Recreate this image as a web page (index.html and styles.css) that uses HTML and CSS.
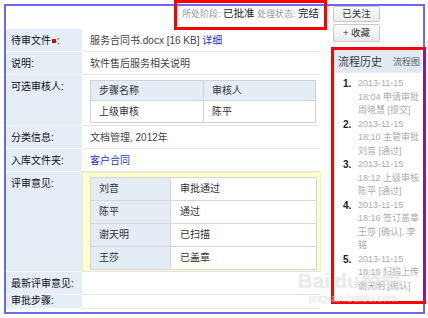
FILE: index.html
```html
<!DOCTYPE html>
<html lang="zh-CN">
<head>
<meta charset="utf-8">
<title>文件审批</title>
<link rel="stylesheet" href="styles.css">
</head>
<body>
<div class="screen">
  <div class="page">
    <div class="main">
      <div class="status">所处阶段: <b>已批准</b> 处理状态: <b>完结</b></div>
      <div class="row h23">
        <div class="lbl">待审文件<i class="req"></i>:</div>
        <div class="val">服务合同书.docx [16 KB] <a class="link">详细</a></div>
      </div>
      <div class="row h23">
        <div class="lbl">说明:</div>
        <div class="val">软件售后服务相关说明</div>
      </div>
      <div class="row h51">
        <div class="lbl">可选审核人:</div>
        <div class="val box">
          <table class="grid steps">
            <tr class="head"><td class="c1">步骤名称</td><td>审核人</td></tr>
            <tr class="body"><td class="c1">上级审核</td><td>陈平</td></tr>
          </table>
        </div>
      </div>
      <div class="row h23">
        <div class="lbl">分类信息:</div>
        <div class="val">文档管理, 2012年</div>
      </div>
      <div class="row h23">
        <div class="lbl">入库文件夹:</div>
        <div class="val"><a class="link">客户合同</a></div>
      </div>
      <div class="row h100">
        <div class="lbl">评审意见:</div>
        <div class="val review">
          <table class="grid opinions">
            <tr><td class="who">刘音</td><td>审批通过</td></tr>
            <tr><td class="who">陈平</td><td>通过</td></tr>
            <tr><td class="who">谢天明</td><td>已扫描</td></tr>
            <tr><td class="who">王莎</td><td>已盖章</td></tr>
          </table>
        </div>
      </div>
      <div class="row h23">
        <div class="lbl">最新评审意见:</div>
        <div class="val"></div>
      </div>
      <div class="row h14">
        <div class="lbl">审批步骤:</div>
        <div class="val"></div>
      </div>
    </div>
    <div class="side">
      <div class="actions">
        <button class="btn btn-top">已关注</button>
        <button class="btn">+ 收藏</button>
      </div>
      <div class="history">
        <div class="hist-head"><span class="hist-title">流程历史</span><span class="hist-chart">流程图</span></div>
        <ol class="hist-list">
          <li><span class="num">1.</span><span class="txt">2013-11-15<br>18:04 申请审批<br>周晓慧 [提交]</span></li>
          <li><span class="num">2.</span><span class="txt">2013-11-15<br>18:10 主管审批<br>刘音 [通过]</span></li>
          <li><span class="num">3.</span><span class="txt">2013-11-15<br>18:12 上级审核<br>陈平 [通过]</span></li>
          <li><span class="num">4.</span><span class="txt">2013-11-15<br>18:16 签订盖章<br>王莎 [确认], 李<br>铭</span></li>
          <li><span class="num">5.</span><span class="txt">2013-11-15<br>18:18 扫描上传<br>谢天明 [确认]</span></li>
        </ol>
      </div>
    </div>
  </div>
  <div class="mark mark-status"></div>
  <div class="mark mark-side"></div>
  <div class="wm wm-big">Bai<span class="wm-du">du</span>经验</div>
  <div class="wm wm-url">jingyan.baidu.com</div>
</div>
</body>
</html>
```

FILE: styles.css
```css
* {
  box-sizing: border-box;
  margin: 0;
  padding: 0;
}

html, body {
  width: 428px;
  height: 318px;
  overflow: hidden;
  background: #fff;
}

body {
  font-family: "Liberation Sans", "Noto Sans CJK SC", sans-serif;
  font-size: 10px;
  color: #333;
}

.screen {
  position: relative;
  width: 428px;
  height: 318px;
  padding: 4px 0 0 4px;
}

.page {
  width: 421px;
  height: 310px;
  border: 2px solid #6a6aee;
  display: flex;
  overflow: hidden;
  background: #fff;
}

.main {
  width: 314px;
  flex: none;
}

.status {
  height: 23px;
  line-height: 14px;
  text-align: right;
  padding-right: 1px;
  color: #9a9a9a;
  font-size: 9px;
  white-space: nowrap;
}

.status b {
  font-weight: normal;
  color: #1a1a1a;
  font-size: 10.5px;
}

.row {
  display: grid;
  grid-template-columns: 76px 1fr;
}

.h23 { height: 23px; }
.h51 { height: 51px; }
.h100 { height: 100px; }
.h14 { height: 14px; }

.lbl {
  background: #e5edf7;
  color: #111;
  padding: 6px 0 0 5px;
  line-height: 12px;
  border-bottom: 1px solid #f6f9fc;
  white-space: nowrap;
}

.val {
  padding: 6px 0 0 8px;
  line-height: 12px;
  border-bottom: 1px solid #e4e4e4;
  color: #444;
  white-space: nowrap;
}

.h14 .lbl, .h14 .val {
  padding-top: 0;
  line-height: 11px;
}

.req {
  display: inline-block;
  width: 4px;
  height: 4px;
  background: #e00000;
  margin: 0 1px 1px 1px;
  vertical-align: middle;
}

.link {
  color: #1f2fe0;
  text-decoration: none;
}

.box {
  padding: 5px 4px 0 8px;
}

.grid {
  border-collapse: collapse;
  width: 226px;
  table-layout: fixed;
}

.grid td {
  border: 1px solid #d2d2d2;
  padding: 0 0 0 8px;
  line-height: 12px;
  color: #333;
  background: #fff;
}

.steps .c1 { width: 113px; }
.steps .head td {
  height: 20px;
  background: #e4ecf6;
}
.steps .body td {
  height: 22px;
}

.review {
  padding: 4px 3px 0 7px;
  background: #fefdd2;
  border: 1px solid #f4f0b6;
  border-bottom-color: #e4e4e4;
}

.opinions {
  width: 227px;
}

.opinions td {
  height: 23px;
  padding-left: 9px;
  border-color: #d6d6d6;
}

.opinions .who {
  width: 80px;
  padding-left: 8px;
  background: #e4ecf6;
}

.side {
  flex: 1;
  padding-left: 13px;
}

.actions {
  display: flex;
  flex-direction: column;
  align-items: flex-start;
  gap: 2px;
}

.btn {
  width: 47px;
  height: 18px;
  border: 1px solid #c9c9c9;
  border-radius: 2px;
  background: linear-gradient(#fbfbfb, #ebebeb);
  font-family: "Liberation Sans", "Noto Sans CJK SC", sans-serif;
  font-size: 9.5px;
  line-height: 16px;
  color: #333;
  text-align: center;
}

.btn-top {
  height: 16px;
  line-height: 14px;
}

.history {
  margin-top: 8px;
}

.hist-head {
  margin: 0 1px 0 2px;
  height: 23px;
  border-radius: 3px;
  background: #e1eaf4;
  display: flex;
  justify-content: space-between;
  align-items: center;
  padding: 0 2px 1px 3px;
  white-space: nowrap;
}

.hist-title {
  font-size: 11px;
  color: #3a3a3a;
}

.hist-chart {
  font-size: 9px;
  color: #5a5a5a;
}

.hist-list {
  list-style: none;
  margin-top: 4px;
  padding-left: 10px;
}

.hist-list li {
  display: grid;
  grid-template-columns: 15px 1fr;
  font-size: 9px;
  line-height: 13.5px;
  white-space: nowrap;
}

.num {
  font-weight: bold;
  color: #222;
  font-size: 10px;
}

.txt {
  color: #ababab;
}

.mark {
  position: absolute;
  border: 3px solid #f00;
  pointer-events: none;
}

.mark-status {
  left: 174px;
  top: 0;
  width: 153px;
  height: 30px;
}

.mark-side {
  left: 331px;
  top: 47px;
  width: 95px;
  height: 257px;
  border-right-color: #92188e;
}

.wm {
  position: absolute;
  color: rgba(255, 255, 255, 0.5);
  text-shadow: 0 0 1px rgba(150, 150, 150, 0.4);
  white-space: nowrap;
  pointer-events: none;
}

.wm-big {
  left: 298px;
  top: 270px;
  font-size: 20px;
  line-height: 22px;
  font-weight: bold;
  letter-spacing: 0.5px;
}

.wm-du {
  margin-left: 4px;
  margin-right: 1px;
}

.wm-url {
  left: 309px;
  top: 292px;
  font-size: 11px;
  line-height: 12px;
}
```
